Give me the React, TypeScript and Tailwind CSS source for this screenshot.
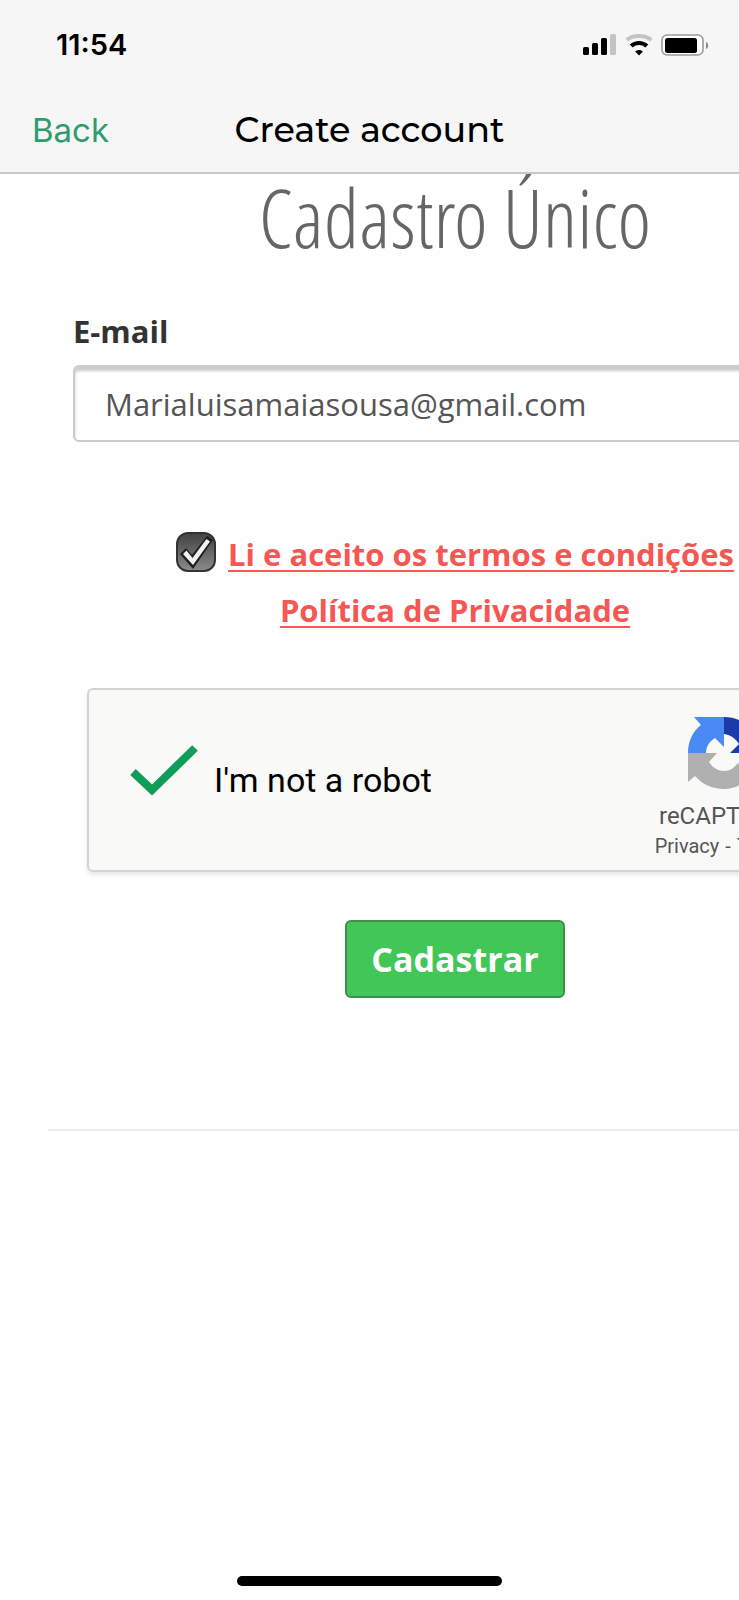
import { useState } from "react";

const StatusBar = () => (
  <div className="flex items-center justify-between h-22 pt-0.5 pl-14 pr-[30px]">
    <span className="font-['Inter',sans-serif] text-[29px] leading-8 font-semibold">11:54</span>
    <div className="flex items-center gap-2">
      {/* Sinal */}
      <svg width="34" height="22" viewBox="0 0 34 22" aria-hidden="true">
        <rect x="0" y="13" width="6" height="8" rx="1.5" />
        <rect x="9" y="9" width="6" height="12" rx="1.5" />
        <rect x="18" y="4" width="6" height="17" rx="1.5" />
        <rect x="27" y="0" width="6" height="21" rx="1.5" fill="#c4c4c4" />
      </svg>
      {/* Wi-Fi */}
      <svg width="28" height="22" viewBox="0 0 28 22" fill="none" aria-hidden="true">
        <path d="M1.6 6C8.500 .8 19.500 .8 26.400 6" stroke="#c4c4c4" strokeWidth="4" />
        <path d="M6.200 12c4.400-4 11.200-4 15.600 0" stroke="#000" strokeWidth="4.200" />
        <path d="M10.200 17.500c2.200-2 5.400-2 7.600 0L14 21.500z" fill="#000" />
      </svg>
      {/* Bateria */}
      <svg width="48" height="22" viewBox="0 0 48 22" aria-hidden="true">
        <rect x="1" y="1" width="41" height="20" rx="5" fill="#fff" stroke="#9b9b9b" strokeWidth="1.600" />
        <rect x="4" y="4" width="32" height="15" rx="2.500" />
        <path d="M45 8c3 1 3 6 0 7z" fill="#8a8a8a" />
      </svg>
    </div>
  </div>
);

const RecaptchaLogo = () => (
  <svg width="74" height="74" viewBox="0 0 74 74" aria-hidden="true">
    <path d="M37 1v30l-9-9c-5 3-9 8-9 15H1C1 26 5 16 14 9L7 1z" fill="#4a8af4" />
    <path d="M37 1c12 0 21 5 27 12l8-7v31H43l9-9c-3-5-8-9-15-10z" fill="#1c3aa9" />
    <path d="M1 37h29l-8 9c4 6 9 9 15 9 6 0 10-3 14-8l13 13c-7 8-16 13-27 13-12 0-22-5-29-13l-7 6z" fill="#b0b0b0" />
  </svg>
);

const App = () => {
  const [email, setEmail] = useState("Marialuisamaiasousa@gmail.com");
  const [accepted, setAccepted] = useState(true);
  const [human, setHuman] = useState(true);

  const handleSubmit = (e: React.FormEvent) => {
    e.preventDefault();
  };

  return (
    <div className="flex flex-col min-h-screen bg-white text-black overflow-hidden font-['Open_Sans',sans-serif]">
      <header className="bg-[#f6f6f6] border-b-2 border-[#c9c9c9]">
        <StatusBar />
        <nav className="grid grid-cols-[1fr_auto_1fr] items-center h-[84px] px-8">
          <a href="#back" className="font-['Inter',sans-serif] text-[33px] leading-10 text-[#2f9c6c]">Back</a>
          <h1 className="font-['Montserrat','Inter',sans-serif] text-[35px] leading-10 font-medium">Create account</h1>
        </nav>
      </header>

      {/* O formulário é mais largo que a tela */}
      <main className="grow overflow-hidden">
        <form onSubmit={handleSubmit} className="-mr-[171px] px-12">
          <div className="flex flex-col px-[25px] pb-[131px] border-b-2 border-[#ececec]">
            <h2 className="text-center whitespace-nowrap font-['Open_Sans_Condensed_Light','Open_Sans_Light','Open_Sans',sans-serif] text-[81px] leading-[86px] font-light text-[#666666]">
              Cadastro Único
            </h2>

            <label htmlFor="email" className="mt-[49px] text-[31px] leading-11 font-bold text-[#333333]">
              E-mail
            </label>
            <input
              id="email"
              type="email"
              name="email"
              value={email}
              onChange={(e) => setEmail(e.target.value)}
              className="mt-3 h-[77px] px-[30px] rounded-md border-2 border-[#cccccc] text-[31px] text-[#555555] shadow-[inset_0_4px_3px_#cccccc] focus:outline-none"
            />

            {/* Termos */}
            <div className="flex justify-center gap-3 mt-[84px] text-[31px] leading-14 font-bold text-[#f55753]">
              <span className="relative w-10 h-10 mt-1.5">
                <input
                  id="terms"
                  type="checkbox"
                  checked={accepted}
                  onChange={(e) => setAccepted(e.target.checked)}
                  className="block size-10 appearance-none rounded-xl border-2 border-[#333333] bg-linear-to-b from-[#444444] to-[#8a8a8a]"
                />
                {accepted && (
                  <svg className="absolute inset-0 pointer-events-none" width="40" height="40" viewBox="0 0 40 40" fill="none" aria-hidden="true">
                    <path d="M4 22l6-6 6 7L31 4l6 4-20 29z" fill="#1f1f1f" />
                    <path d="M7 22l3.500-3.500 6 7.500L30.500 7l3.500 2.500L17 33z" fill="#f2f2f2" />
                  </svg>
                )}
              </span>
              <label htmlFor="terms" className="whitespace-nowrap">
                <a href="#termos" className="underline decoration-2 underline-offset-4">Li e aceito os termos e condições</a>
              </label>
            </div>
            <a href="#privacidade" className="self-center text-[31px] leading-14 font-bold text-[#f55753] underline decoration-2 underline-offset-4">
              Política de Privacidade
            </a>

            {/* reCAPTCHA */}
            <div className="flex justify-between mx-3.5 mt-[50px] h-[184px] pl-[41px] pr-7 rounded-md border-2 border-[#d3d3d3] bg-[#f9f9f8] shadow-[0_3px_4px_#e8e8e8] font-['Roboto',sans-serif]">
              <div className="flex items-center gap-4">
                <span className="relative w-17 h-13 mb-5">
                  <input
                    id="robot"
                    type="checkbox"
                    checked={human}
                    onChange={(e) => setHuman(e.target.checked)}
                    className="block w-17 h-13 appearance-none checked:border-0 border-2 border-[#c1c1c1]"
                  />
                  {human && (
                    <svg className="absolute inset-0 pointer-events-none" width="68" height="52" viewBox="0 0 68 52" fill="none" aria-hidden="true">
                      <path d="M3 28l19 18L65 4" stroke="#0f9d58" strokeWidth="8" />
                    </svg>
                  )}
                </span>
                <label htmlFor="robot" className="text-[34px] leading-10">I'm not a robot</label>
              </div>
              <div className="flex flex-col items-center pt-[26px] text-[#555555]">
                <RecaptchaLogo />
                <span className="mt-2.5 text-[24px] leading-8">reCAPTCHA</span>
                <span className="flex gap-1.5 text-[20px] leading-7 whitespace-nowrap">
                  <a href="#privacy">Privacy</a>
                  <span>-</span>
                  <a href="#terms">Terms</a>
                </span>
              </div>
            </div>

            <button
              type="submit"
              className="self-center mt-12 h-[78px] px-6 rounded-md border-2 border-[#3f8f4a] bg-[#43c658] text-[34px] font-bold text-white cursor-pointer"
            >
              Cadastrar
            </button>
          </div>
        </form>
      </main>

      <div className="self-center w-[265px] h-2.5 mb-3.5 rounded-full bg-black" />
    </div>
  );
};

export default App;
